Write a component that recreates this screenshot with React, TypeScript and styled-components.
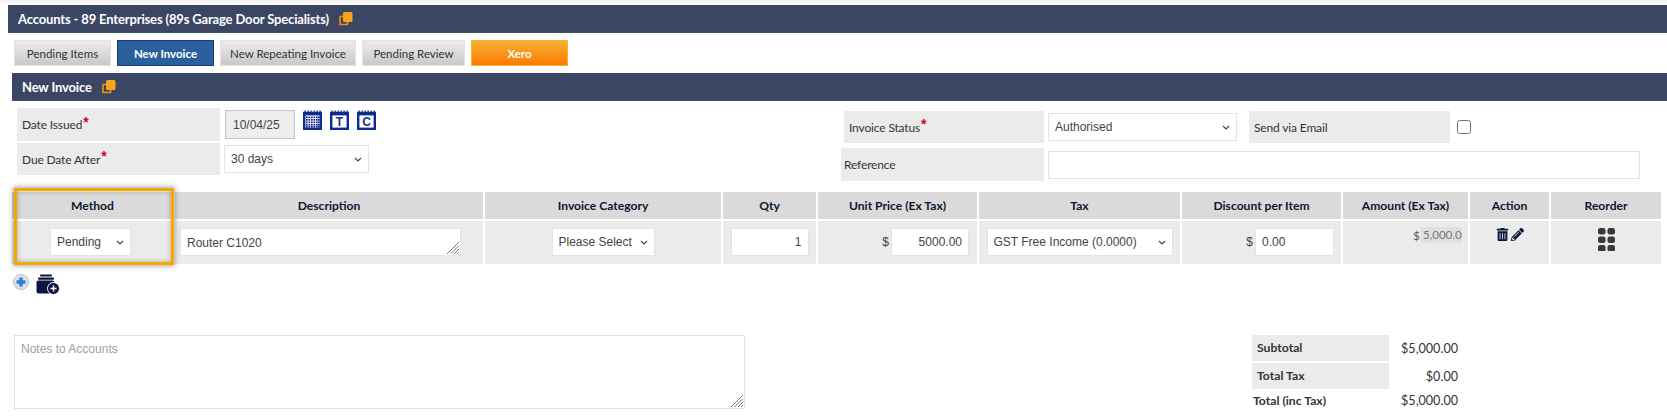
import React from 'react';
import styled, { createGlobalStyle } from 'styled-components';
import { FaPencilAlt, FaTrashAlt } from 'react-icons/fa';

const GlobalStyle = createGlobalStyle`
  html, body { margin: 0; padding: 0; background: #fff; }
  body { font-family: Lato, "Liberation Sans", sans-serif; color: #333; }
`;

const chevron =
  "data:image/svg+xml,%3Csvg xmlns='http://www.w3.org/2000/svg' width='8' height='5' viewBox='0 0 8 5'%3E%3Cpath d='M1 1l3 3 3-3' fill='none' stroke='%23444' stroke-width='1.2'/%3E%3C/svg%3E";

const Page = styled.div`
  width: 1667px;
  height: 419px;
  padding-top: 5px;
  box-sizing: border-box;
  overflow: hidden;
  background: linear-gradient(#f1f1f1, #fff 5px);
`;

const TitleBar = styled.div<{ $inset: number }>`
  display: flex;
  align-items: center;
  gap: 10px;
  height: 28px;
  margin-left: ${p => p.$inset}px;
  padding-left: 10px;
  background: #3b4664;
  border-bottom: 1px solid #35596b;
  box-sizing: border-box;
  color: #fff;
  font-size: 13px;
  font-weight: 700;
  letter-spacing: -0.15px;
`;

const Tabs = styled.div`
  display: flex;
  gap: 6px;
  margin: 7px 0 7px 14px;
`;

const Tab = styled.button<{ $kind?: 'active' | 'xero'; $w: number }>`
  width: ${p => p.$w}px;
  height: 26px;
  padding: 0;
  box-sizing: border-box;
  font: ${p => (p.$kind ? 700 : 400)} 11.5px Lato, sans-serif;
  color: ${p => (p.$kind ? '#fff' : '#333')};
  border: 1px solid ${p => (p.$kind === 'active' ? '#173f73' : p.$kind === 'xero' ? '#f9b233' : '#e2e2e2')};
  background: ${p =>
    p.$kind === 'active'
      ? '#2a5f9e'
      : p.$kind === 'xero'
        ? 'linear-gradient(#f7b134, #fb7a00)'
        : 'linear-gradient(#ececec, #c9c9c9)'};
`;

const Form = styled.div`
  display: flex;
  height: 91px;
  padding-top: 7px;
  box-sizing: border-box;
`;

const LeftFields = styled.div`
  display: flex;
  flex-direction: column;
  gap: 2px;
  width: 844px;
  padding-left: 17px;
  box-sizing: border-box;
`;

const RightFields = styled.div`
  display: flex;
  flex-direction: column;
  gap: 5px;
  margin-top: 3px;
`;

const FieldRow = styled.div`
  display: flex;
  align-items: center;
`;

const Label = styled.div<{ $w: number; $h: number; $pad?: number; $ml?: number }>`
  display: flex;
  align-items: center;
  width: ${p => p.$w}px;
  height: ${p => p.$h}px;
  margin-left: ${p => p.$ml ?? 0}px;
  padding-left: ${p => p.$pad ?? 5}px;
  box-sizing: border-box;
  background: #ebebeb;
  font-size: 12px;
  letter-spacing: -0.15px;
  color: #333;
`;

const Req = styled.span`
  color: #d0021b;
  font: 700 14px "Liberation Sans", sans-serif;
  line-height: 0;
  margin-left: 1px;
  position: relative;
  top: -3px;
`;

const DateBox = styled.input`
  width: 70px;
  height: 29px;
  margin-left: 5px;
  padding: 0 0 0 7px;
  box-sizing: border-box;
  border: 1px solid #c8c8c8;
  background: #eeeeee;
  font: 12px "Liberation Sans", sans-serif;
  color: #444;
`;

const CalendarRow = styled.div`
  display: flex;
  gap: 8px;
  margin: -9px 0 0 8px;
`;

const Select = styled.select<{ $w: number; $ml?: number }>`
  appearance: none;
  width: ${p => p.$w}px;
  height: 28px;
  margin-left: ${p => p.$ml ?? 0}px;
  padding: 0 0 0 6px;
  box-sizing: border-box;
  background: #fff url("${chevron}") no-repeat right 6px center;
  border: 1px solid #e4e4e4;
  border-radius: 0;
  font: 12px "Liberation Sans", sans-serif;
  color: #444;
`;

const RefInput = styled.input`
  width: 592px;
  height: 28px;
  margin-left: 4px;
  box-sizing: border-box;
  border: 1px solid #e4e4e4;
`;

const Check = styled.input`
  width: 14px;
  height: 14px;
  margin: 0 0 0 7px;
`;

const TableWrap = styled.div`
  position: relative;
  margin-left: 12px;
  width: 1649px;
`;

const LineGrid = styled.div`
  display: grid;
  grid-template-columns: 161px 308px 236px 93px 159px 201px 159px 125px 79px 110px;
  grid-template-rows: 27px 43px;
  gap: 2px;
`;

const Head = styled.div`
  display: flex;
  align-items: center;
  justify-content: center;
  background: #dadada;
  font-size: 12.1px;
  font-weight: 700;
  color: #0f1533;
`;

const Cell = styled.div<{ $justify?: string; $pr?: number; $pl?: number }>`
  display: flex;
  align-items: flex-start;
  justify-content: ${p => p.$justify ?? 'center'};
  padding: 7px ${p => p.$pr ?? 0}px 0 ${p => p.$pl ?? 0}px;
  box-sizing: border-box;
  background: #ebebeb;
`;

const Highlight = styled.div`
  position: absolute;
  left: 2px;
  top: -4px;
  width: 160px;
  height: 77px;
  box-sizing: border-box;
  border: 3px solid #f5a800;
  box-shadow: 0 0 5px 1px rgba(0, 0, 0, 0.35), inset 0 0 5px rgba(0, 0, 0, 0.3);
  pointer-events: none;
`;

const TextareaWrap = styled.div`
  position: relative;
  display: flex;
`;

const Hatch = styled.svg`
  position: absolute;
  right: 1px;
  bottom: 1px;
  width: 14px;
  height: 14px;
  pointer-events: none;
`;

const Description = styled.textarea`
  width: 281px;
  height: 28px;
  padding: 7px 6px 0;
  box-sizing: border-box;
  border: 1px solid #e4e4e4;
  font: 12px "Liberation Sans", sans-serif;
  color: #444;
  outline: none;
  resize: none;
`;

const NumberBox = styled.input<{ $w: number; $align?: string }>`
  width: ${p => p.$w}px;
  height: 28px;
  padding: 0 6px;
  box-sizing: border-box;
  border: 1px solid #e4e4e4;
  text-align: ${p => p.$align ?? 'right'};
  font: 12px "Liberation Sans", sans-serif;
  color: #444;
`;

const Dollar = styled.span`
  font: 12px "Liberation Sans", sans-serif;
  color: #444;
  line-height: 28px;
  margin-right: 2px;
`;

const AmountWrap = styled.div`
  display: flex;
  align-items: center;
  margin: -1px 6px 0 0;
  font-size: 12px;
  color: #555;
`;

const AmountValue = styled.span`
  width: 41px;
  height: 16px;
  margin-left: 1px;
  padding-left: 2px;
  overflow: hidden;
  box-sizing: border-box;
  background: #e0e0e0;
  line-height: 16px;
  font-size: 11.5px;
  color: #777;
  white-space: nowrap;
`;

const ActionIcons = styled.div`
  display: flex;
  gap: 2px;
  color: #0d1440;
  font-size: 13px;
`;

const AddRow = styled.div`
  display: flex;
  align-items: flex-start;
  gap: 7px;
  margin: 10px 0 0 13px;
  height: 61px;
`;

const Bottom = styled.div`
  display: flex;
  align-items: flex-start;
`;

const Notes = styled.textarea`
  width: 731px;
  height: 74px;
  padding: 6px;
  box-sizing: border-box;
  border: 1px solid #e2e2e2;
  font: 12px "Liberation Sans", sans-serif;
  outline: none;
  resize: none;
  &::placeholder { color: #a0a0a0; }
`;

const NotesWrap = styled(TextareaWrap)`
  margin-left: 14px;
`;

const Totals = styled.div`
  display: grid;
  grid-template-columns: 137px 69px;
  grid-auto-rows: 26px;
  row-gap: 2px;
  margin-left: 507px;
`;

const TotalLabel = styled.div<{ $plain?: boolean }>`
  display: flex;
  align-items: ${p => (p.$plain ? 'flex-start' : 'center')};
  padding: ${p => (p.$plain ? '2px 0 0 1px' : '0 0 2px 5px')};
  background: ${p => (p.$plain ? 'transparent' : '#ebebeb')};
  font-size: 12.2px;
  font-weight: 700;
  color: #333;
`;

const TotalValue = styled.div<{ $plain?: boolean }>`
  text-align: right;
  font-size: 12.6px;
  color: #333;
  line-height: ${p => (p.$plain ? '19px' : '28px')};
`;

const CopyIcon = () => (
  <svg width="14" height="15" viewBox="0 0 14 15">
    <path d="M1 5.5h3M1 5v8.5h7.5V11" fill="none" stroke="#e8950c" strokeWidth="1.6" />
    <rect x="4" y="1" width="9.5" height="10" rx="1.5" fill="#f8a51b" />
  </svg>
);

const CalendarIcon = ({ letter }: { letter?: string }) => (
  <svg width="19" height="20" viewBox="0 0 19 20">
    <rect x="1.2" y="3" width="16.6" height="15.8" fill="#fff" stroke="#0f2c8c" strokeWidth="2.4" />
    <rect x="0" y="2" width="19" height="3.4" fill="#0f2c8c" />
    {[2, 5, 8, 11, 14, 17].map(x => (
      <rect key={x} x={x - 0.5} y="0.5" width="1.3" height="3" fill="#0f2c8c" />
    ))}
    {letter ? (
      <text x="9.5" y="16" textAnchor="middle" fontSize="12" fontWeight="700" fontFamily="Liberation Sans" fill="#14307f">
        {letter}
      </text>
    ) : (
      <g fill="#0f2c8c">
        {[6.5, 9, 11.5, 14, 16].map(y =>
          [3, 5.5, 8, 10.5, 13, 15].map(x => <rect key={`${x}-${y}`} x={x} y={y} width="1.7" height="1.7" />)
        )}
      </g>
    )}
  </svg>
);

const PlusIcon = () => (
  <svg width="16" height="16" viewBox="0 0 16 16">
    <circle cx="8" cy="8" r="7.5" fill="#e2e2e2" stroke="#bdbdbd" />
    <path d="M8 3.5v9M3.5 8h9" stroke="#2f7fe0" strokeWidth="3.4" />
  </svg>
);

const StackAddIcon = () => (
  <svg width="24" height="21" viewBox="0 0 24 21">
    <rect x="4" y="0.5" width="12" height="2" rx="1" fill="#0d1440" />
    <rect x="2" y="3.5" width="16" height="2.2" rx="1" fill="#0d1440" />
    <rect x="0.5" y="6.5" width="18" height="13" rx="2" fill="#0d1440" />
    <circle cx="17.5" cy="14.5" r="6" fill="#0d1440" stroke="#fff" strokeWidth="1" />
    <path d="M17.5 11.5v6M14.5 14.5h6" stroke="#fff" strokeWidth="1.5" />
  </svg>
);

const GripIcon = () => (
  <svg width="17" height="23" viewBox="0 0 17 23">
    {[0, 8.5, 17].map(y =>
      [0, 9.5].map(x => <rect key={`${x}-${y}`} x={x} y={y} width="7.5" height="6.5" rx="2.2" fill="#38383d" />)
    )}
  </svg>
);

const HatchMark = () => (
  <Hatch viewBox="0 0 14 14">
    <path d="M13 1L1 13M13 4.5L4.5 13M13 8L8 13M13 11L11 13" stroke="#777" strokeWidth="1" />
  </Hatch>
);

const headings = [
  'Method',
  'Description',
  'Invoice Category',
  'Qty',
  'Unit Price (Ex Tax)',
  'Tax',
  'Discount per Item',
  'Amount (Ex Tax)',
  'Action',
  'Reorder',
];

export default function App() {
  return (
    <Page>
      <GlobalStyle />
      <TitleBar $inset={8}>
        Accounts - 89 Enterprises (89s Garage Door Specialists) <CopyIcon />
      </TitleBar>
      <Tabs>
        <Tab $w={97}>Pending Items</Tab>
        <Tab $w={97} $kind="active">New Invoice</Tab>
        <Tab $w={136}>New Repeating Invoice</Tab>
        <Tab $w={103}>Pending Review</Tab>
        <Tab $w={97} $kind="xero">Xero</Tab>
      </Tabs>
      <TitleBar $inset={12}>
        New Invoice <CopyIcon />
      </TitleBar>
      <Form>
        <LeftFields>
          <FieldRow>
            <Label $w={203} $h={33}>Date Issued<Req>*</Req></Label>
            <DateBox defaultValue="10/04/25" readOnly />
            <CalendarRow>
              <CalendarIcon />
              <CalendarIcon letter="T" />
              <CalendarIcon letter="C" />
            </CalendarRow>
          </FieldRow>
          <FieldRow>
            <Label $w={203} $h={32}>Due Date After<Req>*</Req></Label>
            <Select $w={145} $ml={4} defaultValue="30 days">
              <option>30 days</option>
            </Select>
          </FieldRow>
        </LeftFields>
        <RightFields>
          <FieldRow>
            <Label $w={200} $h={32}>Invoice Status<Req>*</Req></Label>
            <Select $w={189} $ml={4} defaultValue="Authorised">
              <option>Authorised</option>
            </Select>
            <Label $w={201} $h={32} $ml={12}>Send via Email</Label>
            <Check type="checkbox" />
          </FieldRow>
          <FieldRow>
            <Label $w={203} $h={33} $pad={3} $ml={-3}>Reference</Label>
            <RefInput />
          </FieldRow>
        </RightFields>
      </Form>
      <TableWrap>
        <LineGrid>
          {headings.map(h => (
            <Head key={h}>{h}</Head>
          ))}
          <Cell $pr={4}>
            <Select $w={81} defaultValue="Pending">
              <option>Pending</option>
            </Select>
          </Cell>
          <Cell $justify="flex-start" $pl={5}>
            <TextareaWrap>
              <Description defaultValue="Router C1020" />
              <HatchMark />
            </TextareaWrap>
          </Cell>
          <Cell>
            <Select $w={103} defaultValue="Please Select">
              <option>Please Select</option>
            </Select>
          </Cell>
          <Cell>
            <NumberBox $w={78} defaultValue="1" />
          </Cell>
          <Cell $justify="flex-end" $pr={8}>
            <Dollar>$</Dollar>
            <NumberBox $w={78} defaultValue="5000.00" />
          </Cell>
          <Cell>
            <Select $w={186} defaultValue="GST Free Income (0.0000)">
              <option>GST Free Income (0.0000)</option>
            </Select>
          </Cell>
          <Cell $justify="flex-end" $pr={7}>
            <Dollar>$</Dollar>
            <NumberBox $w={79} $align="left" defaultValue="0.00" />
          </Cell>
          <Cell $justify="flex-end">
            <AmountWrap>
              $<AmountValue>5,000.00</AmountValue>
            </AmountWrap>
          </Cell>
          <Cell>
            <ActionIcons>
              <FaTrashAlt />
              <FaPencilAlt />
            </ActionIcons>
          </Cell>
          <Cell>
            <GripIcon />
          </Cell>
        </LineGrid>
        <Highlight />
      </TableWrap>
      <AddRow>
        <PlusIcon />
        <StackAddIcon />
      </AddRow>
      <Bottom>
        <NotesWrap>
          <Notes placeholder="Notes to Accounts" />
          <HatchMark />
        </NotesWrap>
        <Totals>
          <TotalLabel>Subtotal</TotalLabel>
          <TotalValue>$5,000.00</TotalValue>
          <TotalLabel>Total Tax</TotalLabel>
          <TotalValue>$0.00</TotalValue>
          <TotalLabel $plain>Total (inc Tax)</TotalLabel>
          <TotalValue $plain>$5,000.00</TotalValue>
        </Totals>
      </Bottom>
    </Page>
  );
}
